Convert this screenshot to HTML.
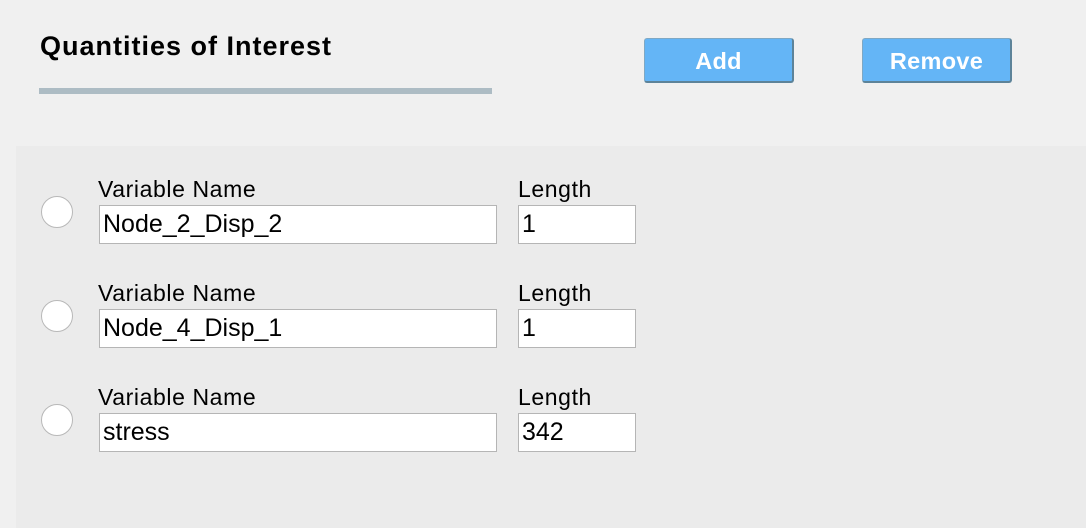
<!DOCTYPE html>
<html><head><style>
body{margin:0;width:1086px;height:528px;background:#f0f0f0;font-family:"Liberation Sans",Arial,sans-serif;position:relative;overflow:hidden}
.t{position:absolute;left:40px;top:31px;font-size:27px;font-weight:bold;color:#000;letter-spacing:1px}
.ln{position:absolute;left:39px;top:88px;width:453px;height:6px;background:#adbcc4}
.b{position:absolute;top:38px;width:150px;height:45px;background:#64b5f6;border:1px solid #7fa8c4;border-right:2px solid #5d8399;border-bottom:2px solid #5d8399;border-radius:3px;box-sizing:border-box;color:#fff;font-weight:bold;font-size:23.5px;text-align:center;line-height:44px;letter-spacing:0.3px}
.p{position:absolute;left:16px;top:146px;width:1070px;height:382px;background:#ebebeb}
.r{position:absolute;width:32px;height:32px;border-radius:50%;background:#fff;border:1px solid #b8b8b8;box-sizing:border-box}
.l{position:absolute;font-size:23px;color:#000;letter-spacing:0.6px}
.i{position:absolute;height:39px;background:#fff;border:1px solid #b5b5b5;box-sizing:border-box;font-size:25px;line-height:37px;padding-left:3px;color:#000}
</style></head><body>
<div class="t">Quantities of Interest</div>
<div class="ln"></div>
<div class="b" style="left:644px">Add</div>
<div class="b" style="left:862px">Remove</div>
<div class="p"></div>

<div class="r" style="left:41px;top:196px"></div>
<div class="l" style="left:98px;top:176px">Variable Name</div>
<div class="l" style="left:518px;top:176px">Length</div>
<div class="i" style="left:99px;top:205px;width:398px">Node_2_Disp_2</div>
<div class="i" style="left:518px;top:205px;width:118px">1</div>

<div class="r" style="left:41px;top:300px"></div>
<div class="l" style="left:98px;top:280px">Variable Name</div>
<div class="l" style="left:518px;top:280px">Length</div>
<div class="i" style="left:99px;top:309px;width:398px">Node_4_Disp_1</div>
<div class="i" style="left:518px;top:309px;width:118px">1</div>

<div class="r" style="left:41px;top:404px"></div>
<div class="l" style="left:98px;top:384px">Variable Name</div>
<div class="l" style="left:518px;top:384px">Length</div>
<div class="i" style="left:99px;top:413px;width:398px">stress</div>
<div class="i" style="left:518px;top:413px;width:118px">342</div>
</body></html>
